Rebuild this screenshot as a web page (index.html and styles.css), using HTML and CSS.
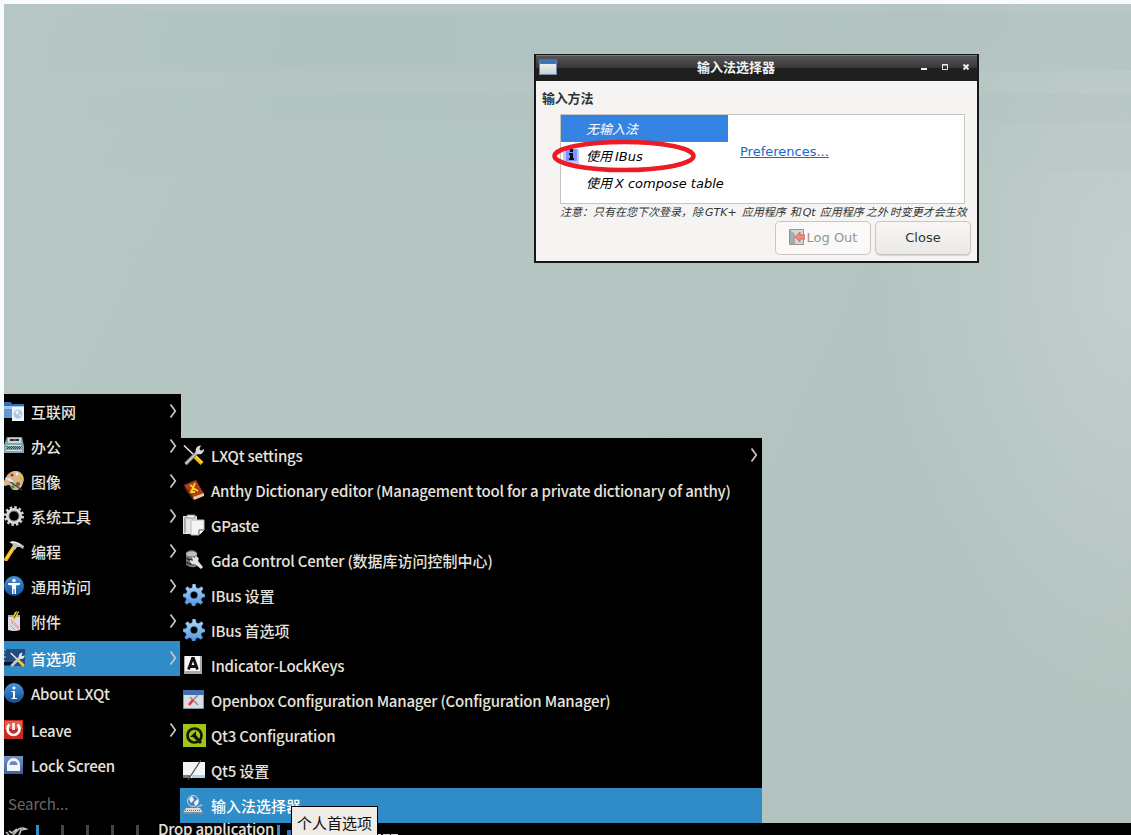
FILE: index.html
```html
<!DOCTYPE html>
<html lang="zh-CN">
<head>
<meta charset="utf-8">
<title>LXQt</title>
<link rel="stylesheet" href="styles.css">
</head>
<body>
<svg width="0" height="0" class="defs">
  <defs>
    <linearGradient id="blue" x1="0" y1="0" x2="0" y2="1"><stop offset="0" stop-color="#4c94d8"/><stop offset="1" stop-color="#0d4f9e"/></linearGradient>
    <linearGradient id="gearfill" x1="0" y1="0" x2="0" y2="1"><stop offset="0" stop-color="#b4d8f6"/><stop offset="1" stop-color="#4b95dc"/></linearGradient>
    <linearGradient id="navy" x1="0" y1="0" x2="0" y2="1"><stop offset="0" stop-color="#7793c4"/><stop offset="1" stop-color="#3d5f9d"/></linearGradient>
    <symbol id="tools" viewBox="0 0 22 22">
      <path d="M1 1.500L11 11" stroke="#e8e8e8" stroke-width="1.6"/>
      <path d="M11.500 12l7.500 7.500" stroke="#f7bd08" stroke-width="4"/><path d="M13 12.500l6 6" stroke="#fff08a" stroke-width="1"/>
      <path d="M2.500 20L16 6.500" stroke="#858783" stroke-width="3.800"/><path d="M2.500 20L16 6.500" stroke="#d2d3d0" stroke-width="1.500"/>
      <path d="M13 8.500c-1-4 1-7 5-7l-1.600 3.500 1.600 1.700 3-1.600c0 4-3 6-6.500 5z" fill="#d9dad7"/>
    </symbol>
    <symbol id="gear" viewBox="0 0 22 22">
      <path fill-rule="evenodd" d="M9.500 0h3l.7 3.500 2.200.9L18.500 2.500l1.800 2-1.800 3 .8 2 2.700.7v2.800l-3 .7-.9 2.100 1.800 2.700-2.100 2-2.900-1.800-2 .8-.8 3.200h-2.900l-.8-3.200-2-.8-2.800 1.800-2-2 1.700-2.800-.8-2L0 12.800v-2.800l3.300-.7.8-2L2.300 4.500l2-2 2.800 1.900 2-.8zM11 7.500a3.500 3.500 0 1 0 0 7 3.500 3.500 0 0 0 0-7z" fill="url(#gearfill)" stroke="#2869b2" stroke-width=".4"/>
    </symbol>
    <symbol id="chev" viewBox="0 0 8 16"><path d="M1.500 1.500L6.300 8l-4.800 6.500" fill="none" stroke="#c8c7c4" stroke-width="1.700"/></symbol>
  </defs>
</svg>

<main class="desktop">
  <section class="dialog">
    <header class="titlebar">
      <span class="app-icon"></span>
      <h1 class="title">输入法选择器</h1>
      <svg class="controls" width="52" height="12" viewBox="0 0 52 12" fill="none" stroke="#eee">
        <path d="M1 8h6" stroke-width="2"/><path d="M22.500 3.500h5v5h-5zM22 4h6"/><path d="M43.500 3.500l5 5M48.500 3.500l-5 5" stroke-width="2"/>
      </svg>
    </header>
    <div class="dialog-body">
      <h2 class="heading">输入方法</h2>
      <div class="chooser">
        <ul class="methods">
          <li class="method selected"><span class="method-icon"></span><span>无输入法</span></li>
          <li class="method"><svg class="method-icon" width="16" height="16"><path d="M0 1h16v15H0z" fill="#c9c8f2"/><path d="M3 1h11v12H3z" fill="#7f92ff"/><path d="M7 1h3v3H7zM6 5h4v5h1v2H6v-2h1V7H6z" fill="#080823"/></svg><span>使用 <i class="latin">IBus</i></span></li>
          <li class="method"><span class="method-icon"></span><span>使用 <i class="latin">X compose table</i></span></li>
        </ul>
        <a class="prefs">Preferences...</a>
      </div>
      <p class="note"><span>注意：只有在您下次登录，除</span><span class="s2">GTK+</span><span class="s5">应用程序</span><span class="s4">和</span><span class="s2">Qt</span><span class="s4">应用程序</span><span class="s2">之外</span><span class="s2">时变更才会生效</span></p>
      <div class="actions">
        <button class="btn disabled"><svg width="16" height="16"><path d="M.5.500h14v15H.5z" fill="#d6d6d4" stroke="#949494"/><path d="M1 1l5 4v10H1z" fill="#aaa"/><path d="M6 8l5-5v3h5v4h-5v3z" fill="#f28b7d" stroke="#d76c61"/></svg><span>Log Out</span></button>
        <button class="btn"><span>Close</span></button>
      </div>
    </div>
    <svg class="mark" width="146" height="34" viewBox="0 0 146 34"><ellipse cx="73" cy="17" rx="69.500" ry="14" fill="none" stroke="#ed1c24" stroke-width="4.600"/></svg>
  </section>

  <nav class="menu main-menu">
    <ul class="group">
      <li class="item"><svg class="icon" viewBox="0 0 20 20"><path d="M0 1h7l1 2h12v14H0z" fill="#346ead"/><path d="M0 5h20v3H0z" fill="#9dc5ed"/><path d="M0 8h16v9H0z" fill="#6199d4"/><path d="M8 6h12v14H8z" fill="#eff4fb"/><circle cx="14" cy="13" r="4.500" fill="#a9c6e8"/><path d="M11 11l3-2 1 3-2 2zM15 14l2-2v4z" fill="#e9f1f8"/></svg><span>互联网</span><svg class="chev"><use href="#chev"/></svg></li>
      <li class="item"><svg class="icon" viewBox="0 0 20 20"><path d="M3 1h15l2 9v7H0V9z" fill="#83a5ac"/><path d="M4 2h13v5H4z" fill="#c5d8da"/><path d="M6 3h9v2H6z" fill="#273437"/><path d="M9 4h3" stroke="#f33"/><path d="M3 9h14v1H3zM2 14h16v1H2z" fill="#d7e3e4"/><path d="M3 10.500h14M4 11.500h13M3 12.500h14" stroke="#36464a" stroke-dasharray="1 1"/></svg><span>办公</span><svg class="chev"><use href="#chev"/></svg></li>
      <li class="item"><svg class="icon" viewBox="0 0 20 20"><path d="M10 0c7-1 12 6 9 12-1 4-4 8-8 7-6 0-3-6-7-5-6 3-5-2-3-6 1-3 4-7 9-8z" fill="#d7b788"/><circle cx="8" cy="4" r="1.600" fill="#c9252c"/><circle cx="13" cy="3" r="1.400" fill="#f2f2ed"/><circle cx="17" cy="8" r="1.800" fill="#e0b519"/><circle cx="9" cy="16" r="1.700" fill="#3b933d"/><circle cx="14" cy="13" r="2" fill="#815634"/><path d="M5 10l13 9" stroke="#31435d" stroke-width="1.500"/><path d="M1 7l5 0 4 4-4 0z" fill="#dce6f2"/></svg><span>图像</span><svg class="chev"><use href="#chev"/></svg></li>
      <li class="item"><svg class="icon" viewBox="0 0 20 20"><circle cx="10" cy="10" r="8.700" fill="none" stroke="#d0d1d0" stroke-width="2.600" stroke-dasharray="2.500 2.055"/><circle cx="10" cy="10" r="6.500" fill="none" stroke="#d9d9d9" stroke-width="3"/><circle cx="10" cy="10" r="5" fill="none" stroke="#777"/></svg><span>系统工具</span><svg class="chev"><use href="#chev"/></svg></li>
      <li class="item"><svg class="icon" viewBox="0 0 20 20"><path d="M1 20L10 6" stroke="#efb516" stroke-width="4"/><path d="M2 18L10 6" stroke="#fff07a"/><path d="M5 1c5-2 9 0 12 2l3 2-1 3-3-2-3 0-2 3-3-2 1-3c-1-1-2-2-4-3z" fill="#bfc1bd"/><path d="M7 1c4 0 7 1 9 3" stroke="#fff" fill="none"/></svg><span>编程</span><svg class="chev"><use href="#chev"/></svg></li>
      <li class="item"><svg class="icon" viewBox="0 0 20 20"><circle cx="10" cy="10" r="10" fill="url(#blue)"/><circle cx="10" cy="4.500" r="1.700" fill="#fff"/><path d="M4 7h12v1.700l-4 .8V18h-1.500v-5h-1v5H8V9.500l-4-.8z" fill="#fff"/></svg><span>通用访问</span><svg class="chev"><use href="#chev"/></svg></li>
      <li class="item"><svg class="icon" viewBox="0 0 20 20"><path d="M4 4h12v15q-6 2-12 0z" fill="#dddbe2"/><path d="M4 4h12v2H4z" fill="#a9a5af"/><path d="M8 8l3-7 3-1 1 1-4 8z" fill="#f1d432"/><path d="M10 7l4-7" stroke="#3b3420"/><path d="M7 11l8 7M7 9l8 7M6 14l5 5" stroke="#dd8d96"/></svg><span>附件</span><svg class="chev"><use href="#chev"/></svg></li>
    </ul>
    <ul class="group">
      <li class="item active"><svg class="icon wide" viewBox="0 0 21 20"><path d="M0 1h21v17H0z" fill="#234b7c"/><path d="M0 2h2M0 5h1M0 9h2M0 13h1" stroke="#cadbea"/><path d="M0 14h9v3H0z" fill="#071421"/><g transform="translate(6 4) scale(.7)"><path d="M1 1.500L11 11" stroke="#eee" stroke-width="2"/><path d="M11 11l9 9" stroke="#f7c923" stroke-width="4"/><path d="M2 20L16 6" stroke="#c1cad0" stroke-width="4"/><path d="M13 8c-1-4 1-7 5-7l-1.600 3.500 1.600 1.700 3-1.600c0 4-3 6-6.500 5z" fill="#e4e8ea"/></g></svg><span>首选项</span><svg class="chev"><use href="#chev"/></svg></li>
      <li class="item"><svg class="icon" viewBox="0 0 20 20"><circle cx="10" cy="10" r="10" fill="url(#blue)"/><circle cx="10" cy="5" r="1.500" fill="#fff"/><path d="M7.500 8H11v7h2v1H7.500v-1H9V9H7.500z" fill="#fff"/></svg><span class="latin-item">About LXQt</span></li>
    </ul>
    <ul class="group">
      <li class="item"><svg class="icon" viewBox="0 0 20 20"><path d="M0 0h19v19H0z" fill="#c72b20"/><path d="M1 1h17v8H1z" fill="#de6251"/><path d="M5.500 4.500a6 6 0 1 0 8 0M9.500 3v7" fill="none" stroke="#fff" stroke-width="2.600"/></svg><span class="latin-item">Leave</span><svg class="chev"><use href="#chev"/></svg></li>
      <li class="item"><svg class="icon" viewBox="0 0 20 20"><path d="M0 1h19v18H0z" fill="url(#navy)"/><path d="M3 16V9.500a6.500 6.500 0 0 1 13 0V16z" fill="#f3f5f8"/><path d="M5.500 10a4 4 0 0 1 8 0z" fill="#6e8abb"/></svg><span class="latin-item">Lock Screen</span></li>
    </ul>
    <div class="search">Search...</div>
  </nav>

  <nav class="menu sub-menu">
    <ul class="group">
      <li class="item"><svg class="icon big"><use href="#tools"/></svg><span class="latin-item">LXQt settings</span><svg class="chev"><use href="#chev"/></svg></li>
      <li class="item"><svg class="icon big" viewBox="0 0 22 22"><path d="M1 6L13 1l8 14-11 5z" fill="#aa3e17"/><path d="M1 6l9 12v3L2 10z" fill="#642308"/><path d="M10 18l11-4v3l-10 4z" fill="#e8c89e"/><path d="M7 6l3 2M12 4l-2 5 5 3M10 9l-2 4 4 0" fill="none" stroke="#ffcf29" stroke-width="1.800"/></svg><span class="latin-item">Anthy Dictionary editor (Management tool for a private dictionary of anthy)</span></li>
      <li class="item"><svg class="icon big" viewBox="0 0 22 22"><path d="M0 2h14v18H0z" fill="#e5e5e5"/><path d="M1 3h2v16H1z" fill="#aaa"/><path d="M4 1h8v3H4z" fill="#fff" stroke="#888"/><path d="M8 6h13v10l-5 5H8z" fill="#f4f4f4" stroke="#bbb"/><path d="M16 21v-5h5" fill="#fff" stroke="#555"/></svg><span class="latin-item">GPaste</span></li>
      <li class="item"><svg class="icon big" viewBox="0 0 22 22"><path d="M3 5c0-5 11-5 11 0v11c0 4-11 2-11-1z" fill="#777"/><ellipse cx="8.500" cy="5" rx="5.500" ry="2.500" fill="#bdbdbd"/><path d="M3 9q5 4 11 0M3 13q5 4 11 0" stroke="#252525" fill="none" stroke-width="1.500"/><path d="M9 8l3 1 1-2q4 2 2 5l5 6-2 2-6-5q-5 1-5-4l3 1z" fill="#e3e3e3"/></svg><span class="latin-item">Gda Control Center (<b class="cjk">数据库访问控制中心</b>)</span></li>
      <li class="item"><svg class="icon big"><use href="#gear"/></svg><span class="latin-item">IBus <b class="cjk">设置</b></span></li>
      <li class="item"><svg class="icon big"><use href="#gear"/></svg><span class="latin-item">IBus <b class="cjk">首选项</b></span></li>
      <li class="item"><svg class="icon big" viewBox="0 0 22 22"><path d="M1 2h18v18H1z" fill="#a9a9a9"/><path d="M2 2h15v15H2z" fill="#f6f6f6"/><path d="M5.500 15.500l4-11h1l4 11M7 12.500h6" fill="none" stroke="#111" stroke-width="2.800"/></svg><span class="latin-item">Indicator-LockKeys</span></li>
      <li class="item"><svg class="icon big" viewBox="0 0 22 22"><path d="M.5 1.500h20v18H.5z" fill="#dadde2" stroke="#8395b4"/><path d="M0 1h21v5H0z" fill="#416fae"/><path d="M6 15l9-9M7 8l8 8" stroke="#8c8f95" stroke-width="1.600"/><path d="M6 16l4-5" stroke="#e83b28" stroke-width="2.500"/></svg><span class="latin-item">Openbox Configuration Manager (Configuration Manager)</span></li>
      <li class="item"><svg class="icon qt" viewBox="0 0 23 23"><path d="M0 0h23v23H0z" fill="#a3c614"/><circle cx="11.500" cy="11.500" r="7" fill="none" stroke="#111805" stroke-width="2.700"/><path d="M7 13l6-6v4l6 7-2 2-7-7z" fill="#111805"/></svg><span class="latin-item">Qt3 Configuration</span></li>
      <li class="item"><svg class="icon qt" viewBox="0 0 23 23"><path d="M0 3h22v16H0z" fill="#f4f4f4"/><path d="M0 16h7v3H0z" fill="#5f896a"/><path d="M9 16h13v3H9z" fill="#a4d7e5"/><path d="M5 21L18 1" stroke="#4a5053" stroke-width="1.200"/></svg><span class="latin-item">Qt5 <b class="cjk">设置</b></span></li>
      <li class="item active"><svg class="icon big" viewBox="0 0 22 22"><circle cx="10" cy="7" r="5.500" fill="#4d80b7" stroke="#c3d9ee"/><path d="M6 5l3-3 2 4-3 3zM11 8l4-3v5l-3 2z" fill="#eef5fa"/><path d="M3 14h14l3 5H0z" fill="#dedfdb"/><path d="M2 16.500h16" stroke="#666" stroke-dasharray="1 1"/><path d="M0 18h20v2H0z" fill="#8a8b87"/><path d="M14 14q0-2 3-2t1-2" fill="none" stroke="#c6d5dd"/></svg><span>输入法选择器</span></li>
    </ul>
  </nav>

  <footer class="panel">
    <svg class="bird" width="23" height="8" viewBox="0 0 23 8"><path d="M1 5l3 3M4 4l3 2 5-4M8 8l6-6q3-2 7 0l-5 1-2 5" fill="none" stroke="#bcbcb8" stroke-width="1.700"/></svg>
    <div class="desks"><i class="desk current"></i><i class="desk"></i><i class="desk"></i><i class="desk"></i><i class="desk"></i></div>
    <span class="drop">Drop application</span>
    <i class="desk current"></i><i class="task-icon"></i>
    <svg class="task" width="25" height="2"><path d="M0 1.500h7M9 1.500h7M17 1.500h7" stroke="#ddd"/></svg>
  </footer>
  <div class="tooltip">个人首选项</div>
</main>
</body>
</html>
```
FILE: styles.css
```css
* { box-sizing: border-box; }
body { margin: 0; overflow: hidden; background: #f7fbfe; font: 500 15px "Noto Sans CJK SC", sans-serif; }
ul { margin: 0; padding: 0; list-style: none; }
.defs { position: absolute; }
.desktop {
  position: relative;
  width: 1127px;
  height: 831px;
  margin: 4px 0 0 4px;
  overflow: hidden;
  background:
    linear-gradient(90deg, transparent 3%, rgba(160,184,180,.26) 25%, rgba(160,184,180,.22) 65%, rgba(180,192,196,.5)) 0 9px / 100% 58px no-repeat,
    linear-gradient(90deg, transparent 6%, rgba(165,188,183,.22) 30%, rgba(178,193,193,.4)) 0 90px / 100% 28px no-repeat,
    linear-gradient(90deg, transparent 6%, rgba(172,193,188,.22) 50%, rgba(185,198,198,.3)) 0 118px / 100% 50px no-repeat,
    radial-gradient(ellipse 250px 440px at 100% 33%, rgba(202,211,211,.75), transparent),
    linear-gradient(115deg, #b6c7c3 0%, #b5c6c2 55%, #b2c3bf 80%, #b5c3c0 100%);
}

/* Input method dialog */
.dialog { position: absolute; left: 530px; top: 50px; width: 445px; height: 209px; border: 2px solid #17181b; border-top-width: 1px; background: #f5f4f2; }
.titlebar { display: flex; align-items: center; height: 26px; padding: 0 6px 4px 3px; border-top: 1px solid #777; background: linear-gradient(#555, #393939 46%, #202020 50%, #1e1e1e); }
.app-icon { width: 18px; height: 16px; margin-top: 1px; border: 1px solid #738cac; border-top: 5px solid #4174b6; background: linear-gradient(#eee, #cdcfd2); }
.title { flex: 1; margin: 0; padding-right: 5px; text-align: center; color: #f4f4f4; font-size: 13px; line-height: 21px; font-weight: 700; }
.controls { margin-right: -1px; }
.dialog-body { padding: 7px 6px; color: #2e3436; font: 13px "DejaVu Sans", "Noto Sans CJK SC", sans-serif; }
.heading { margin: 0; font: 700 13px/20px "Noto Sans CJK SC", sans-serif; letter-spacing: -.2px; }
.chooser { display: flex; height: 90px; margin: 6px 6px 0 18px; border: 1px solid #c6c5bd; background: #fff; }
.methods { width: 167px; font: italic 13px/27px "Noto Sans CJK SC", sans-serif; color: #000; }
.method { display: flex; align-items: center; height: 27px; gap: 7px; padding-left: 2px; white-space: nowrap; }
.method-icon { flex: none; width: 16px; height: 16px; }
.selected { color: #fff; background: #3584e4; }
.latin { font-family: "DejaVu Sans", sans-serif; }
.prefs { margin: 27px 0 0 12px; line-height: 19px; color: #1c68c8; text-decoration: underline; }
.note { display: flex; height: 17px; margin: 0 5px 0 18px; font: italic 11px/18px "DejaVu Sans", "Noto Sans CJK SC", sans-serif; white-space: nowrap; }
.s2 { margin-left: 2px; }
.s4 { margin-left: 4px; }
.s5 { margin-left: 5px; }
.actions { display: flex; justify-content: flex-end; gap: 4px; }
.btn { display: flex; align-items: center; justify-content: center; gap: 2px; width: 96px; height: 34px; padding: 0 0 2px; border: 1px solid #c8c6c1; border-radius: 5px; background: linear-gradient(#f7f6f5, #ebe9e7); box-shadow: 0 1px 1px #0002; color: #2e3436; font: 13px "DejaVu Sans", sans-serif; }
.btn.disabled { background: #faf9f8; box-shadow: none; color: #929595; }
.mark { position: absolute; left: 15px; top: 84px; }

/* Menus */
.menu { position: absolute; background: #000; color: #e6e2dc; }
.main-menu { left: 0; top: 390px; width: 177px; height: 429px; }
.sub-menu { left: 176px; top: 434px; width: 582px; height: 385px; }
.group + .group { margin-top: 2px; }
.item { display: flex; align-items: center; height: 35px; white-space: nowrap; line-height: 35px; }
.item > span { line-height: 35px; }
.latin-item { letter-spacing: -.21px; }
.cjk { font-weight: 500; letter-spacing: 0; }
.main-menu .icon { width: 20px; height: 20px; margin: -1px 7px 0 0; }
.main-menu .wide { width: 21px; margin-right: 6px; }
.main-menu .active { width: 176px; }
.icon { flex: none; }
.sub-menu .big { width: 22px; height: 22px; margin: -1px 6px 0 3px; }
.sub-menu .qt { width: 23px; height: 23px; margin: -1px 5px 0 3px; }
.chev { width: 8px; height: 16px; margin: -2px 4px 0 auto; }
.main-menu .active .chev { margin-right: 3px; }
.active { background: #308cc6; color: #fff; }
.search { padding: 9px 4px 0; line-height: 24px; color: #6c6a68; font-weight: 400; }

.panel { position: absolute; left: 0; top: 819px; display: flex; width: 1127px; height: 12px; overflow: hidden; background: #000; color: #e6e2dc; }
.bird { margin: 4px 0 0 1px; }
.desks { display: flex; gap: 22px; margin: 0 19px 0 8px; }
.desk { width: 3px; height: 10px; margin-top: 2px; background: #444; }
.desk.current { background: #308cc6; }
.drop { width: 116px; line-height: 12px; letter-spacing: -.21px; white-space: nowrap; }
.drop + .desk { margin-left: 3px; }
.task-icon { width: 12px; height: 6px; margin: 7px 0 0 7px; background: #4471b6; }
.task { margin: 10px 0 0 75px; }
.tooltip { position: absolute; left: 287px; top: 802px; width: 87px; height: 40px; padding: 0 5px; border: 1px solid #000; background: #efebe7; color: #111; font-weight: 400; line-height: 31px; white-space: nowrap; }
```
